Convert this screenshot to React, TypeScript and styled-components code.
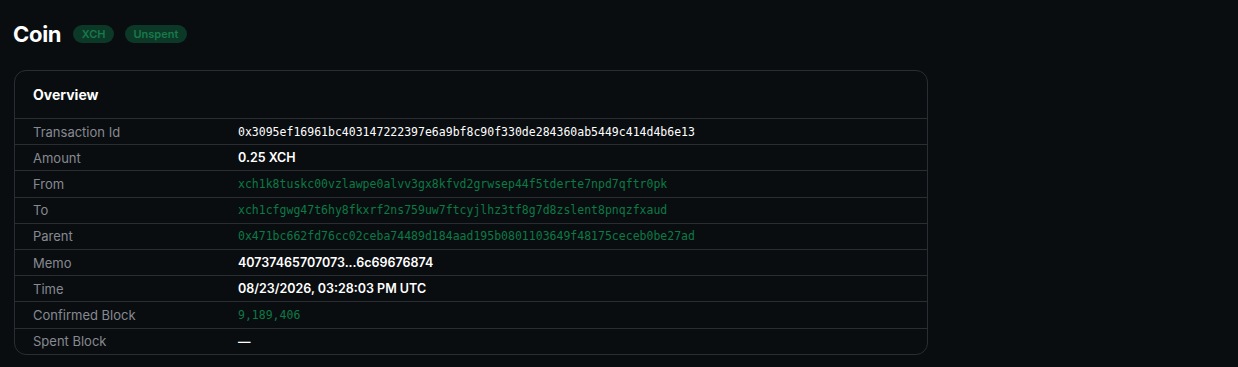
import React from 'react';
import styled, { createGlobalStyle } from 'styled-components';

const GlobalStyle = createGlobalStyle`
  html, body {
    margin: 0;
    background: #0a0d10;
    color: #ffffff;
    font-family: Inter, "Noto Sans", sans-serif;
  }
`;

type Row = {
  label: string;
  value: string;
  kind: 'mono' | 'link' | 'strong';
};

const rows: Row[] = [
  {
    label: 'Transaction Id',
    value: '0x3095ef16961bc403147222397e6a9bf8c90f330de284360ab5449c414d4b6e13',
    kind: 'mono',
  },
  { label: 'Amount', value: '0.25 XCH', kind: 'strong' },
  {
    label: 'From',
    value: 'xch1k8tuskc00vzlawpe0alvv3gx8kfvd2grwsep44f5tderte7npd7qftr0pk',
    kind: 'link',
  },
  {
    label: 'To',
    value: 'xch1cfgwg47t6hy8fkxrf2ns759uw7ftcyjlhz3tf8g7d8zslent8pnqzfxaud',
    kind: 'link',
  },
  {
    label: 'Parent',
    value: '0x471bc662fd76cc02ceba74489d184aad195b0801103649f48175ceceb0be27ad',
    kind: 'link',
  },
  { label: 'Memo', value: '40737465707073...6c69676874', kind: 'strong' },
  { label: 'Time', value: '08/23/2026, 03:28:03 PM UTC', kind: 'strong' },
  { label: 'Confirmed Block', value: '9,189,406', kind: 'link' },
  { label: 'Spent Block', value: '—', kind: 'strong' },
];

export default function App() {
  return (
    <Page>
      <GlobalStyle />
      <TitleRow>
        <Title>Coin</Title>
        <Badge>XCH</Badge>
        <Badge>Unspent</Badge>
      </TitleRow>
      <Card>
        <CardHeader>Overview</CardHeader>
        {rows.map((r) => (
          <DetailRow key={r.label}>
            <Label>{r.label}</Label>
            <Value $kind={r.kind}>{r.value}</Value>
          </DetailRow>
        ))}
      </Card>
    </Page>
  );
}

const Page = styled.div`
  padding: 20px 310px 13px 14px;
  display: flex;
  flex-direction: column;
  gap: 22px;
`;

const TitleRow = styled.div`
  display: flex;
  align-items: center;
  gap: 11px;
  margin-left: -1px;
`;

const Title = styled.h1`
  margin: 0 1px 0 0;
  font-size: 22px;
  font-weight: 700;
  line-height: 28px;
  color: #ffffff;
  letter-spacing: -0.3px;
`;

const Badge = styled.span`
  display: inline-flex;
  align-items: center;
  height: 18px;
  padding: 0 8.5px;
  border-radius: 9px;
  background: #0c3827;
  color: #18794b;
  font-size: 11px;
  font-weight: 600;
`;

const Card = styled.div`
  width: 912px;
  border: 1px solid #2a2d31;
  border-radius: 12px;
  overflow: hidden;
`;

const CardHeader = styled.div`
  height: 47px;
  padding: 0 18px;
  display: flex;
  align-items: center;
  font-size: 14px;
  font-weight: 700;
  color: #ffffff;
`;

const DetailRow = styled.div`
  display: grid;
  grid-template-columns: 205px 1fr;
  align-items: center;
  height: 25.2px;
  padding: 0 18px;
  border-top: 1px solid #2a2d31;
  &:last-child {
    height: 25.5px;
  }
`;

const Label = styled.div`
  font-size: 13px;
  color: #868a90;
`;

const Value = styled.div<{ $kind: Row['kind'] }>`
  white-space: nowrap;
  ${({ $kind }) =>
    $kind === 'strong'
      ? `
    font-size: 12.5px;
    font-weight: 600;
    color: #ffffff;
  `
      : `
    font-family: "DejaVu Sans Mono", "Liberation Mono", monospace;
    font-size: 11.5px;
    color: ${$kind === 'link' ? '#0b7a45' : '#ffffff'};
  `}
`;
